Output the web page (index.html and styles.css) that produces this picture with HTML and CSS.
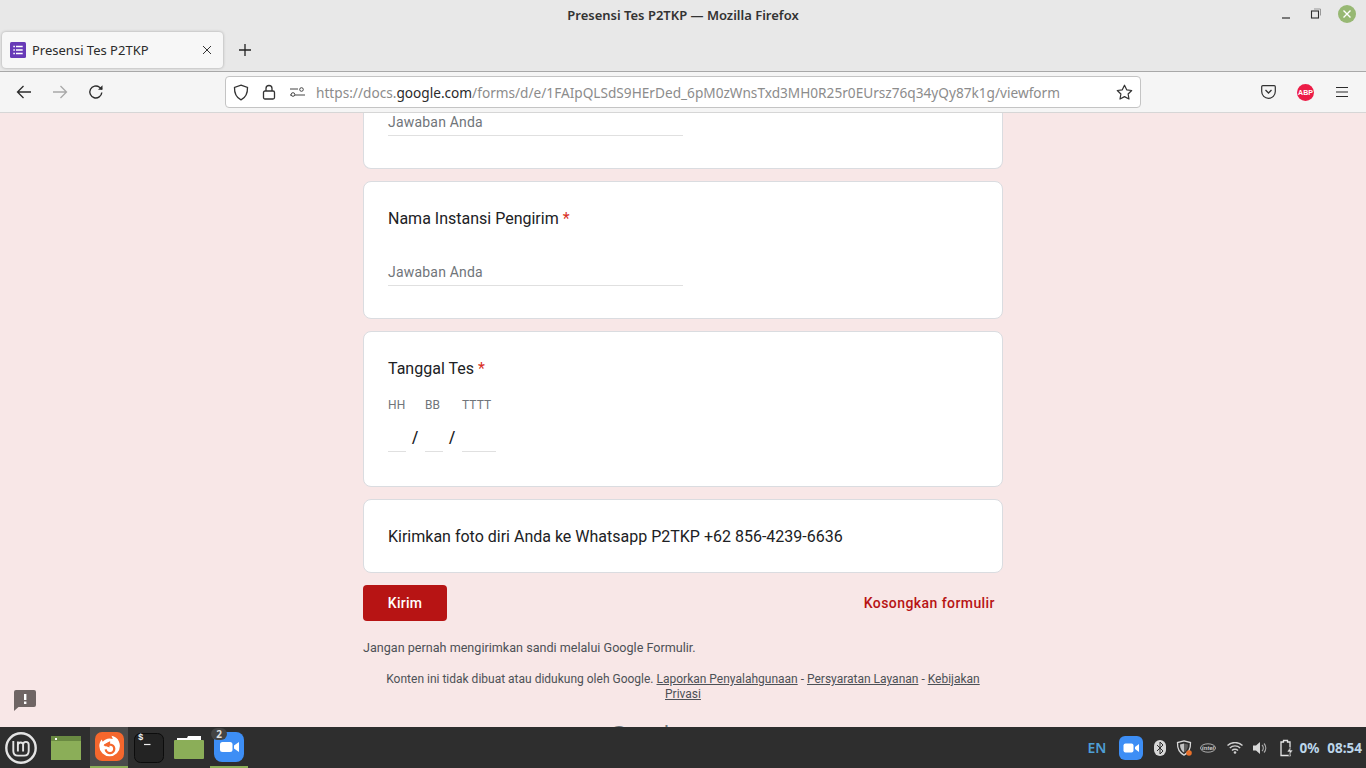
FILE: index.html
```html
<!DOCTYPE html>
<html lang="id">
<head>
<meta charset="utf-8">
<title>Presensi Tes P2TKP</title>
<link rel="stylesheet" href="styles.css">
</head>
<body>
<div class="screen">
  <header class="browser">
    <div class="titlebar">
      <span class="win-title">Presensi Tes P2TKP — Mozilla Firefox</span>
      <div class="win-controls">
        <svg class="wc" width="12" height="12" viewBox="0 0 12 12"><path d="M2 10h8" stroke="#2e2e2e" stroke-width="1.2" fill="none"/></svg>
        <svg class="wc" width="12" height="12" viewBox="0 0 12 12"><rect x="1.500" y="3" width="7" height="7" stroke="#2e2e2e" stroke-width="1.100" fill="none"/><path d="M4 1h6.500v6.500" stroke="#999" stroke-width="1" fill="none"/></svg>
        <svg class="wc-close" width="18" height="18" viewBox="0 0 18 18"><circle cx="9" cy="9" r="9" fill="#97b873"/><path d="M5.500 5.500l7 7M12.500 5.500l-7 7" stroke="#fff" stroke-width="1.400"/></svg>
      </div>
    </div>
    <div class="tabbar">
      <div class="tab">
        <svg width="16" height="16" viewBox="0 0 16 16"><rect width="16" height="16" rx="1.500" fill="#673ab7"/><path d="M3.300 4.500h1.600M6 4.500h6.700M3.300 8h1.600M6 8h6.700M3.300 11.500h1.600M6 11.500h6.700" stroke="#fff" stroke-width="1.700"/></svg>
        <span class="tab-title">Presensi Tes P2TKP</span>
        <svg class="tab-x" width="10" height="10" viewBox="0 0 10 10"><path d="M1 1l8 8M9 1l-8 8" stroke="#333" stroke-width="1"/></svg>
      </div>
      <svg class="newtab" width="12" height="12" viewBox="0 0 12 12"><path d="M6 0v12M0 6h12" stroke="#222" stroke-width="1.300"/></svg>
    </div>
    <div class="toolbar">
      <div class="nav">
        <svg width="16" height="16" viewBox="0 0 16 16"><path d="M15 8H1.500M7.500 2L1.500 8l6 6" stroke="#2b2b2b" stroke-width="1.300" fill="none"/></svg>
        <svg width="16" height="16" viewBox="0 0 16 16"><path d="M1 8h13.500M8.500 2l6 6-6 6" stroke="#a8a8a8" stroke-width="1.300" fill="none"/></svg>
        <svg width="16" height="16" viewBox="0 0 16 16"><path d="M13.800 8.500A6 6 0 1 1 11.500 3.200L14 5.300" stroke="#2b2b2b" stroke-width="1.400" fill="none"/><path d="M14.500 1.200v4.600H10z" fill="#2b2b2b"/></svg>
      </div>
      <div class="urlbar">
        <svg width="16" height="17" viewBox="0 0 16 17"><path d="M8 1.200l6.500 2.200c.2 5.500-1.800 10-6.500 12.400C3.300 13.400 1.300 8.900 1.500 3.400z" stroke="#333" stroke-width="1.300" fill="none"/></svg>
        <svg class="lock" width="14" height="16" viewBox="0 0 14 16"><rect x="1.500" y="7" width="11" height="8" rx="1.500" stroke="#333" stroke-width="1.300" fill="none"/><path d="M4 7V4.500a3 3 0 0 1 6 0V7" stroke="#333" stroke-width="1.300" fill="none"/></svg>
        <svg class="perm" width="15" height="10" viewBox="0 0 15 10"><circle cx="11.500" cy="2.500" r="1.800" stroke="#444" fill="none"/><path d="M0 2.500h8M0 8.500h15" stroke="#444" fill="none" transform="translate(0 -.5)"/><circle cx="3" cy="7.500" r="1.800" stroke="#444" fill="#fff"/></svg>
        <span class="url"><span class="dim">https://docs.</span>google.com<span class="dim">/forms/d/e/1FAIpQLSdS9HErDed_6pM0zWnsTxd3MH0R25r0EUrsz76q34yQy87k1g/viewform</span></span>
        <svg class="star" width="17" height="16" viewBox="0 0 17 16"><path d="M8.500 1.200l2.200 4.600 5 .7-3.600 3.500.9 5-4.500-2.400L4 15l.9-5L1.300 6.500l5-.7z" stroke="#333" stroke-width="1.200" fill="none" stroke-linejoin="round"/></svg>
      </div>
      <div class="tools">
        <svg width="15" height="14" viewBox="0 0 15 14"><path d="M1.800.7h11.400c.6 0 1.100.5 1.100 1.100v4.700a6.800 6.800 0 0 1-13.600 0V1.800C.7 1.200 1.200.7 1.800.7z" stroke="#333" stroke-width="1.200" fill="none"/><path d="M4.500 5l3 3 3-3" stroke="#333" stroke-width="1.300" fill="none"/></svg>
        <span class="abp">ABP</span>
        <svg width="14" height="12" viewBox="0 0 14 12"><path d="M1 1.500h12M1 6h12M1 10.500h12" stroke="#2b2b2b" stroke-width="1.200"/></svg>
      </div>
    </div>
  </header>

  <main class="page">
    <div class="column">
      <section class="card card-clipped">
        <div class="answer">Jawaban Anda</div>
      </section>
      <section class="card card-name">
        <h2 class="question">Nama Instansi Pengirim <span class="req">*</span></h2>
        <div class="answer">Jawaban Anda</div>
      </section>
      <section class="card card-date">
        <h2 class="question">Tanggal Tes <span class="req">*</span></h2>
        <div class="date-row">
          <div class="date-part part-s"><span class="date-label">HH</span><span class="date-line"></span></div>
          <span class="slash">/</span>
          <div class="date-part part-s"><span class="date-label">BB</span><span class="date-line"></span></div>
          <span class="slash">/</span>
          <div class="date-part part-l"><span class="date-label">TTTT</span><span class="date-line"></span></div>
        </div>
      </section>
      <section class="card card-note">
        <p class="note">Kirimkan foto diri Anda ke Whatsapp P2TKP +62 856-4239-6636</p>
      </section>
      <div class="actions">
        <span class="submit">Kirim</span>
        <span class="clear">Kosongkan formulir</span>
      </div>
      <p class="warn">Jangan pernah mengirimkan sandi melalui Google Formulir.</p>
      <p class="disclaimer">Konten ini tidak dibuat atau didukung oleh Google. <u>Laporkan Penyalahgunaan</u> - <u>Persyaratan Layanan</u> - <u>Kebijakan Privasi</u></p>
      <div class="brand">Google <span class="brand-sub">Formulir</span></div>
    </div>
    <svg class="feedback" width="22" height="21" viewBox="0 0 22 21"><path d="M2 0h18a2 2 0 0 1 2 2v13a2 2 0 0 1-2 2H4.500L0 21V2a2 2 0 0 1 2-2z" fill="#6f6564"/><path d="M10 4h2.400v6H10zM10 11.500h2.400v2.400H10z" fill="#fff"/></svg>
  </main>

  <footer class="taskbar">
    <div class="launcher">
      <span class="launch-item">
        <svg width="32" height="32" viewBox="0 0 32 32"><circle cx="16" cy="16" r="14.700" fill="none" stroke="#e4e4e4" stroke-width="2.400"/><path d="M8.300 9v10c0 2.800 1.900 4.600 4.600 4.600h6.200c2.800 0 4.600-1.800 4.600-4.600v-6.300a2.800 2.800 0 0 0-5.600 0V19.500M12.900 9.500V19.500M12.900 12.700a2.800 2.800 0 0 1 5.500 0" fill="none" stroke="#e4e4e4" stroke-width="1.900"/></svg>
      </span>
      <span class="launch-item">
        <svg width="30" height="24" viewBox="0 0 30 24"><rect width="30" height="24" fill="#8bae58"/><rect width="30" height="5" fill="#6a8a42"/><rect x="4" y="2" width="2" height="2" fill="#fff"/></svg>
      </span>
      <span class="launch-item item-active">
        <svg width="29" height="29" viewBox="0 0 29 29"><rect width="29" height="29" rx="7" fill="#f5672d"/><path d="M14.500 6.500c1.200 0 2.300.2 3.300.6L16.500 3.800c3.500.5 6.300 2.600 7.400 5.700.7 1.300 1 2.900 1 4.500a10.300 10.300 0 1 1-20.600 0c0-2.500.9-4.800 2.400-6.500l1 2.200c1.500-1.700 4.300-3.200 6.800-3.200z" fill="#fff"/><path d="M9.500 13.500l4.500-2.400v1.600c.4-.1.800-.1 1.100-.1a4.300 4.300 0 1 1-4.400 4.800" fill="none" stroke="#f5672d" stroke-width="2.300"/><path d="M8.500 13.200L14.500 9.500v6z" fill="#f5672d"/></svg>
      </span>
      <span class="launch-item">
        <svg width="30" height="30" viewBox="0 0 30 30"><rect x=".5" y=".5" width="29" height="29" rx="6" fill="#232323" stroke="#0c0c0c"/><path d="M10 11.500h6.500" stroke="#eee" stroke-width="1.200"/></svg>
        <span class="term-prompt">$</span>
      </span>
      <span class="launch-item">
        <svg width="30" height="25" viewBox="0 0 30 25"><path d="M3 3h10l1-2h13v5H3z" fill="#fff"/><path d="M1 5h28a1 1 0 0 1 1 1v17a1 1 0 0 1-1 1H1a1 1 0 0 1-1-1V6a1 1 0 0 1 1-1z" fill="#8bae58"/></svg>
      </span>
      <span class="launch-item item-running">
        <svg width="30" height="30" viewBox="0 0 30 30"><rect width="30" height="30" rx="8" fill="#3d8ef5"/><rect x="6" y="10" width="12.500" height="10" rx="2.500" fill="#fff"/><path d="M20 13.500l5-3.500v10l-5-3.500z" fill="#fff"/></svg>
        <span class="count">2</span>
      </span>
    </div>
    <div class="tray">
      <span class="lang">EN</span>
      <svg width="24" height="24" viewBox="0 0 24 24"><rect width="24" height="24" rx="6" fill="#3d8ef5"/><rect x="4.500" y="7.500" width="10" height="9" rx="2" fill="#fff"/><path d="M16 11l4-3v8l-4-3z" fill="#fff"/></svg>
      <svg width="12" height="16" viewBox="0 0 12 16"><rect width="12" height="16" rx="6" fill="#d8d8d8"/><path d="M3 5l6 6-3 3V2l3 3-6 6" stroke="#2e2e2e" fill="none"/></svg>
      <svg width="16" height="16" viewBox="0 0 16 16"><path d="M8 .8l6.500 1.800c.2 5.600-2.300 10.500-6.500 12.500C3.800 13.100 1.300 8.200 1.500 2.600z" fill="none" stroke="#d8d8d8" stroke-width="1.300"/><path d="M8 3.500l4 1.100c0 3.800-1.400 6.500-4 8z" fill="#5e5e5e"/><path d="M8 3.500l-4 1.100c0 3.800 1.400 6.500 4 8z" fill="#c4c4c4"/><circle cx="13" cy="13" r="2.800" fill="#e8702a"/></svg>
      <svg width="16" height="10" viewBox="0 0 16 10"><ellipse cx="8" cy="5" rx="7.500" ry="4.200" fill="none" stroke="#bbb" stroke-width=".9"/><text x="8" y="7" text-anchor="middle" class="intel">intel</text></svg>
      <svg width="16" height="12" viewBox="0 0 16 12"><path d="M.5 3.500a11 11 0 0 1 15 0M2.800 6a7.500 7.500 0 0 1 10.400 0M5 8.500a4.200 4.200 0 0 1 6 0" stroke="#d0d0d0" stroke-width="1.400" fill="none"/><circle cx="8" cy="10.500" r="1.300" fill="#d0d0d0"/></svg>
      <svg width="15" height="14" viewBox="0 0 15 14"><path d="M0 4.500h3L7 1v12L3 9.500H0z" fill="#d8d8d8"/><path d="M9 4a4 4 0 0 1 0 6M11 2.500a6.500 6.500 0 0 1 0 9" stroke="#aaa" stroke-width="1.100" fill="none"/></svg>
      <svg width="14" height="18" viewBox="0 0 14 18"><path d="M1 3h2.500V1.500h4V3H10v13.500H1z" stroke="#e6e6e6" stroke-width="1.300" fill="none"/><path d="M10 8l-3 5h3l-1 4 4-6h-3z" fill="#e6e6e6" stroke="#2e2e2e" stroke-width=".6"/></svg>
      <span class="tray-text">0%</span>
      <span class="tray-text">08:54</span>
    </div>
  </footer>
</div>
</body>
</html>
```

FILE: styles.css
```css
* { box-sizing: border-box; }
html, body { margin: 0; padding: 0; height: 100%; overflow: hidden; }
body { font-family: "Noto Sans", sans-serif; }
.screen { width: 1366px; height: 768px; display: flex; flex-direction: column; overflow: hidden; }

.browser { flex: none; background: #e8e8e8; }
.titlebar { height: 30px; display: flex; align-items: center; justify-content: center; position: relative; }
.win-title { font-size: 13px; font-weight: 600; color: #333; }
.win-controls { position: absolute; right: 10px; top: 5px; display: flex; align-items: center; gap: 17px; }
.wc { display: block; }
.wc:first-child { margin-right: 1px; }
.wc-close { display: block; margin-left: -1px; }

.tabbar { height: 42px; display: flex; align-items: flex-start; padding: 2px 0 0 2px; border-bottom: 1px solid #a8a8a8; }
.tab { width: 221px; height: 36px; background: #f7f7f7; border-radius: 4px; box-shadow: 0 0 3px rgba(0,0,0,.3); display: flex; align-items: center; padding: 0 11px 0 8px; gap: 6px; }
.tab-title { font-size: 13px; color: #2b2b2b; flex: 1; white-space: nowrap; }
.newtab { margin: 12px 0 0 16px; }

.toolbar { height: 41px; background: #f5f5f5; display: flex; align-items: center; border-bottom: 1px solid #d6d6d6; }
.nav { width: 225px; padding-left: 16px; display: flex; align-items: center; gap: 20px; }
.urlbar { width: 916px; height: 32px; background: #fff; border: 1px solid #c4c4c4; border-radius: 4px; display: flex; align-items: center; padding: 0 7px; }
.urlbar > svg { flex: none; margin-right: 13px; }
.urlbar > svg.lock { margin-right: 14px; }
.urlbar > svg.perm { margin-right: 11px; }
.urlbar > svg.star { margin: 0 0 0 auto; }
.url { font-size: 13.650px; color: #2b2b2b; white-space: nowrap; }
.dim { color: #8c8c8c; }
.tools { flex: 1; display: flex; align-items: center; justify-content: flex-end; gap: 21px; padding-right: 17px; }
.abp { width: 17px; height: 17px; border-radius: 50%; background: #ec1c46; color: #fff; font: 700 7px/17px "Liberation Sans", sans-serif; text-align: center; }

.page { flex: 1; min-height: 0; background: #f8e7e7; overflow: hidden; position: relative; }
.column { width: 640px; margin-left: 363px; display: flex; flex-direction: column; font-family: Roboto, sans-serif; }
.card { background: #fff; border: 1px solid #dadce0; border-radius: 8px; margin-bottom: 12px; padding: 0 24px; }
.card-clipped { height: 56px; border-top: 0; border-radius: 0 0 8px 8px; }
.card-name { height: 138px; padding-top: 27px; }
.card-date { height: 156px; padding-top: 27px; }
.card-note { height: 74px; display: flex; align-items: center; padding-top: 2px; }
.question { margin: 0; font-size: 16px; font-weight: 400; line-height: 20px; color: #202124; }
.req { color: #d93025; }
.answer { width: 295px; height: 23px; border-bottom: 1px solid #e0e0e0; font-size: 14px; line-height: 19px; color: #70757a; letter-spacing: .2px; }
.card-name .answer { margin-top: 34px; }
.date-row { display: flex; margin-top: 18px; }
.date-part { display: flex; flex-direction: column; }
.part-s { width: 18px; }
.part-l { width: 34px; }
.date-label { font-size: 12px; line-height: 16px; color: #70757a; white-space: nowrap; letter-spacing: .1px; }
.date-line { height: 39px; border-bottom: 1px solid #e0e0e0; }
.slash { width: 19px; padding: 31px 0 0 6px; font-size: 16px; line-height: 20px; color: #202124; font-weight: 500; }
.note { margin: 0; font-size: 16px; line-height: 22px; color: #202124; }
.actions { display: flex; justify-content: space-between; align-items: center; height: 36px; }
.submit { width: 84px; height: 36px; background: #b71414; color: #fff; border-radius: 4px; font-size: 14px; font-weight: 500; line-height: 36px; text-align: center; letter-spacing: .25px; }
.clear { font-size: 14px; font-weight: 500; color: #b71414; padding-right: 8px; letter-spacing: .43px; }
.warn { margin: 19px 0 0; font-size: 12.600px; line-height: 15px; color: #4d5156; }
.disclaimer { margin: 17px 0 0; padding: 0 20px; font-size: 12px; line-height: 15px; color: #4d5156; text-align: center; }
.brand { margin-top: 19px; padding-right: 6px; text-align: center; font-family: "Liberation Sans", sans-serif; font-size: 22px; line-height: 26px; color: #70757a; }
.brand-sub { font-size: 17px; }
.feedback { position: absolute; left: 14px; top: 577px; }

.taskbar { flex: none; height: 41px; background: #2e2e2e; display: flex; justify-content: space-between; align-items: center; }
.launcher { display: flex; align-items: center; height: 41px; padding-left: 2px; }
.launch-item { width: 38px; height: 41px; display: flex; align-items: center; justify-content: center; position: relative; }
.launch-item:nth-child(1) { width: 37px; margin-right: 8px; }
.launch-item:nth-child(2) { margin-right: 5px; }
.launch-item:nth-child(3),
.launch-item:nth-child(4),
.launch-item:nth-child(5) { margin-right: 2px; }
.item-active { background: #4b4b4b; border-bottom: 2px solid #8bae58; }
.item-running { border-bottom: 2px solid #8bae58; }
.term-prompt { position: absolute; left: 8px; top: 6px; font: 700 9px/11px "Liberation Mono", monospace; color: #eee; }
.count { position: absolute; left: 1px; top: 1px; width: 16px; height: 12px; border-radius: 6px; background: #444; color: #ddd; font: 700 10px/12px "Noto Sans", sans-serif; text-align: center; }
.tray { display: flex; align-items: center; padding-right: 4px; }
.tray > :nth-child(2) { margin-left: 13px; }
.tray > :nth-child(3) { margin-left: 11px; }
.tray > :nth-child(4) { margin-left: 10px; }
.tray > :nth-child(5) { margin-left: 8px; }
.tray > :nth-child(6) { margin-left: 11px; }
.tray > :nth-child(7) { margin-left: 10px; }
.tray > :nth-child(8) { margin-left: 12px; }
.tray > :nth-child(9) { margin-left: 5px; }
.tray > :nth-child(10) { margin-left: 8px; }
.lang { font-size: 14px; font-weight: 600; color: #4e9fd6; }
.tray-text { font-size: 13.500px; font-weight: 700; color: #bcd6ea; }
.intel { font: italic 700 6px "Liberation Sans", sans-serif; fill: #ccc; }
```
